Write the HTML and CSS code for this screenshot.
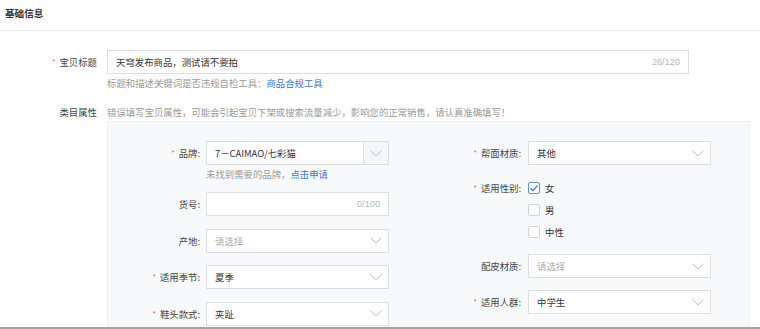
FILE: index.html
```html
<!DOCTYPE html>
<html lang="zh">
<head>
<meta charset="utf-8">
<title>基础信息</title>
<link rel="stylesheet" href="styles.css">
</head>
<body>
<div class="page">
  <div class="header">基础信息</div>
  <div class="form">
    <div class="row-top">
      <div class="top-label"><span class="star">*</span>宝贝标题</div>
      <div class="title-input">
        <span class="val">天穹发布商品，测试请不要拍</span>
        <span class="count">26/120</span>
      </div>
    </div>
    <div class="top-help">标题和描述关键词是否违规自检工具：<a class="link">商品合规工具</a></div>

    <div class="row-cat">
      <div class="top-label cat-label">类目属性</div>
      <div class="cat-body">
        <div class="warn">错误填写宝贝属性，可能会引起宝贝下架或搜索流量减少，影响您的正常销售，请认真准确填写！</div>
        <div class="panel">
          <div class="col col-left">
            <div class="prow">
              <div class="plabel"><span class="star">*</span>品牌:</div>
              <div class="field select brand">
                <span class="val">7－CAIMAO/七彩猫</span>
                <span class="arrow-box"><svg class="arrow" width="12" height="7" viewBox="0 0 12 7"><path d="M0.5 0.8 L6 5.8 L11.5 0.8" fill="none" stroke="#b8bcc4" stroke-width="1"/></svg></span>
              </div>
            </div>
            <div class="phelp">未找到需要的品牌，<a class="link">点击申请</a></div>
            <div class="prow r-sku">
              <div class="plabel">货号:</div>
              <div class="field input"><span class="count">0/100</span></div>
            </div>
            <div class="prow r-next">
              <div class="plabel">产地:</div>
              <div class="field select">
                <span class="val placeholder">请选择</span>
                <svg class="arrow" width="12" height="7" viewBox="0 0 12 7"><path d="M0.5 0.8 L6 5.8 L11.5 0.8" fill="none" stroke="#b8bcc4" stroke-width="1"/></svg>
              </div>
            </div>
            <div class="prow r-next">
              <div class="plabel"><span class="star">*</span>适用季节:</div>
              <div class="field select">
                <span class="val">夏季</span>
                <svg class="arrow" width="12" height="7" viewBox="0 0 12 7"><path d="M0.5 0.8 L6 5.8 L11.5 0.8" fill="none" stroke="#b8bcc4" stroke-width="1"/></svg>
              </div>
            </div>
            <div class="prow r-next">
              <div class="plabel"><span class="star">*</span>鞋头款式:</div>
              <div class="field select">
                <span class="val">夹趾</span>
                <svg class="arrow" width="12" height="7" viewBox="0 0 12 7"><path d="M0.5 0.8 L6 5.8 L11.5 0.8" fill="none" stroke="#b8bcc4" stroke-width="1"/></svg>
              </div>
            </div>
          </div>
          <div class="col col-right">
            <div class="prow">
              <div class="plabel"><span class="star">*</span>帮面材质:</div>
              <div class="field select">
                <span class="val">其他</span>
                <svg class="arrow" width="12" height="7" viewBox="0 0 12 7"><path d="M0.5 0.8 L6 5.8 L11.5 0.8" fill="none" stroke="#b8bcc4" stroke-width="1"/></svg>
              </div>
            </div>
            <div class="prow r-gender">
              <div class="plabel glabel"><span class="star">*</span>适用性别:</div>
              <div class="checks">
                <div class="opt"><span class="box checked"><svg width="10" height="10" viewBox="0 0 10 10"><path d="M1.6 5.2 L4 7.5 L8.6 2.4" fill="none" stroke="#3f7fd4" stroke-width="1.4"/></svg></span>女</div>
                <div class="opt"><span class="box"></span>男</div>
                <div class="opt"><span class="box"></span>中性</div>
              </div>
            </div>
            <div class="prow r-pipi">
              <div class="plabel">配皮材质:</div>
              <div class="field select">
                <span class="val placeholder">请选择</span>
                <svg class="arrow" width="12" height="7" viewBox="0 0 12 7"><path d="M0.5 0.8 L6 5.8 L11.5 0.8" fill="none" stroke="#b8bcc4" stroke-width="1"/></svg>
              </div>
            </div>
            <div class="prow r-crowd">
              <div class="plabel"><span class="star">*</span>适用人群:</div>
              <div class="field select">
                <span class="val">中学生</span>
                <svg class="arrow" width="12" height="7" viewBox="0 0 12 7"><path d="M0.5 0.8 L6 5.8 L11.5 0.8" fill="none" stroke="#b8bcc4" stroke-width="1"/></svg>
              </div>
            </div>
          </div>
        </div>
      </div>
    </div>
  </div>
</div>
</body>
</html>
```

FILE: styles.css
```css
html, body {
  margin: 0;
  padding: 0;
  background: #ffffff;
}
body {
  font-family: "Noto Sans CJK SC", "Noto Sans", sans-serif;
  font-size: 9.4px;
  color: #333333;
}
.page {
  height: 329px;
  box-sizing: border-box;
  border-bottom: 2px solid #a3a3a3;
  overflow: hidden;
}
.header {
  height: 31px;
  box-sizing: border-box;
  border-bottom: 1px solid #ececec;
  padding-left: 5px;
  line-height: 26px;
  font-size: 9.6px;
  font-weight: bold;
  color: #333;
}
.form {
  padding-top: 19px;
}
.row-top {
  display: flex;
  align-items: flex-start;
}
.top-label {
  width: 97px;
  text-align: right;
  line-height: 24px;
  color: #444;
  margin-right: 10px;
  flex: none;
}
.star {
  color: #f05a4a;
  font-size: 7.5px;
  margin-right: 4px;
  vertical-align: 1px;
}
.title-input {
  width: 582px;
  height: 24px;
  box-sizing: border-box;
  border: 1px solid #dcdee3;
  background: #fff;
  display: flex;
  align-items: center;
  justify-content: space-between;
  padding: 0 8px;
  color: #333;
}
.count {
  color: #b5b8be;
  font-family: "Liberation Sans", "Noto Sans", sans-serif;
  font-size: 9.2px;
}
.top-help {
  margin: 4px 0 0 107px;
  line-height: 11px;
  color: #999;
}
.link {
  color: #3a78c8;
  text-decoration: none;
}
.row-cat {
  display: flex;
  align-items: flex-start;
  margin-top: 17px;
}
.cat-label {
  line-height: 12px;
}
.cat-body {
  display: flex;
  flex-direction: column;
}
.warn {
  line-height: 12px;
  color: #999;
}
.panel {
  margin-top: 3px;
  width: 643px;
  height: 260px;
  box-sizing: border-box;
  background: #f8f9fb;
  border: 1px solid #eef0f3;
  padding-top: 19px;
  display: flex;
}
.col {
  display: flex;
  flex-direction: column;
}
.col-left {
  width: 320px;
}
.prow {
  display: flex;
  align-items: flex-start;
}
.plabel {
  width: 93px;
  flex: none;
  text-align: right;
  line-height: 24px;
  color: #444;
}
.col-left .plabel {
  width: 92px;
  margin-right: 6px;
}
.col-right .plabel {
  margin-right: 7px;
}
.field {
  width: 183px;
  height: 24px;
  box-sizing: border-box;
  border: 1px solid #dcdee3;
  background: #fff;
  display: flex;
  align-items: center;
  justify-content: space-between;
  padding: 0 0 0 8px;
}
.field.input {
  justify-content: flex-end;
  padding-right: 8px;
}
.select {
  padding-right: 6px;
}
.select.brand {
  padding-right: 0;
}
.arrow-box {
  width: 24px;
  height: 22px;
  border-left: 1px solid #dcdee3;
  background: #f5f6f8;
  display: flex;
  align-items: center;
  justify-content: center;
}
.arrow {
  display: block;
}
.val {
  color: #333;
}
.placeholder {
  color: #a7abb2;
}
.phelp {
  margin: 3px 0 0 98px;
  line-height: 12px;
  color: #999;
}
.r-sku {
  margin-top: 12px;
}
.r-next {
  margin-top: 12.5px;
}
.r-gender {
  margin-top: 12px;
}
.glabel {
  line-height: 22px;
}
.checks {
  display: flex;
  flex-direction: column;
}
.opt {
  height: 22px;
  display: flex;
  align-items: center;
  color: #333;
}
.box {
  width: 12px;
  height: 12px;
  box-sizing: border-box;
  border: 1px solid #cfd2d8;
  border-radius: 2px;
  background: #fff;
  margin-right: 5px;
  display: flex;
  align-items: center;
  justify-content: center;
}
.box.checked {
  border-color: #5b8fd6;
}
.r-pipi {
  margin-top: 11px;
}
.r-crowd {
  margin-top: 12px;
}
```
